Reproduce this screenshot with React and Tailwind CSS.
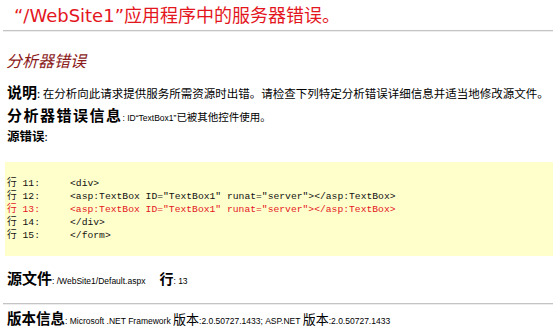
const codeLines = [
  { no: '11', text: '<div>' },
  { no: '12', text: '<asp:TextBox ID="TextBox1" runat="server"></asp:TextBox>' },
  { no: '13', text: '<asp:TextBox ID="TextBox1" runat="server"></asp:TextBox>', error: true },
  { no: '14', text: '</div>' },
  { no: '15', text: '</form>' },
];

const cjk = "font-['Noto_Sans_CJK_SC',sans-serif]";
const latin = "font-['Liberation_Sans','Noto_Sans_CJK_SC',sans-serif]";

function Label({ children, className = 'text-[15px]' }) {
  return <b className={`${cjk} ${className} leading-[18px] font-bold`}>{children}</b>;
}

function Row({ className = '', children }) {
  return (
    <div className={`${cjk} h-[18px] pl-[4px] text-[11.5px] leading-[18px] whitespace-nowrap ${className}`}>
      {children}
    </div>
  );
}

export default function App() {
  return (
    <div className="h-[331px] w-[558px] overflow-hidden bg-white pl-[3px] pr-[5px] text-black">
      <h1 className="mt-[3px] h-[22px] pl-[11px] text-[18px] leading-[22px] font-normal whitespace-nowrap text-[#e4161d] font-['DejaVu_Sans','Noto_Sans_CJK_SC',sans-serif]">
        “/WebSite1”<span className={cjk}>应用程序中的服务器错误。</span>
      </h1>
      <div className="mt-[5px] h-[2px] border-t border-[#c4c4c4] border-b border-b-[#ededed]" />

      <h2 className={`${cjk} mt-[18px] h-[20px] pl-[3px] text-[16px] leading-[20px] font-normal italic text-[#8b1a1a]`}>
        分析器错误
      </h2>

      <Row className="mt-[13px]">
        <Label>说明</Label>: 在分析向此请求提供服务所需资源时出错。请检查下列特定分析错误详细信息并适当地修改源文件。
      </Row>

      <Row className="mt-[5px]">
        <Label className="text-[15px] tracking-[1.5px]">分析器错误信息</Label>
        <span className={`${latin} text-[8.5px]`}>: ID“TextBox1”</span>
        <span className="text-[10.5px]">已被其他控件使用。</span>
      </Row>

      <Row className="mt-[3px]">
        <Label className="text-[12.5px]">源错误</Label>:
      </Row>

      <div className="mt-[17px] ml-[2px] h-[94px] bg-[#ffffcc] pt-[15px] pl-[2px]">
        {codeLines.map((line) => (
          <div
            key={line.no}
            className={`flex h-[13px] items-center text-[9.7px] leading-[13px] whitespace-pre font-['Liberation_Mono','Noto_Sans_CJK_SC',monospace] ${
              line.error ? 'text-[#e4161d]' : 'text-[#111]'
            }`}
          >
            <span className="w-[63px] shrink-0">行 {line.no}:</span>
            <span>{line.text}</span>
          </div>
        ))}
      </div>

      <Row className="mt-[13px]">
        <Label>源文件</Label>
        <span className={`${latin} text-[8.5px]`}>: /WebSite1/Default.aspx</span>
        <span className="ml-[14px]">
          <Label className="text-[14px]">行</Label>
          <span className={`${latin} text-[8.5px]`}>: 13</span>
        </span>
      </Row>

      <div className="mt-[16px] h-[2px] border-t border-[#c4c4c4] border-b border-b-[#ededed]" />

      <Row className="mt-[4px]">
        <Label className="text-[14.5px]">版本信息</Label>
        <span className={`${latin} text-[8.5px]`}>: Microsoft .NET Framework </span>
        <span className="text-[13px]">版本</span>
        <span className={`${latin} text-[8.5px]`}>:2.0.50727.1433; ASP.NET </span>
        <span className="text-[13px]">版本</span>
        <span className={`${latin} text-[8.5px]`}>:2.0.50727.1433</span>
      </Row>
    </div>
  );
}
